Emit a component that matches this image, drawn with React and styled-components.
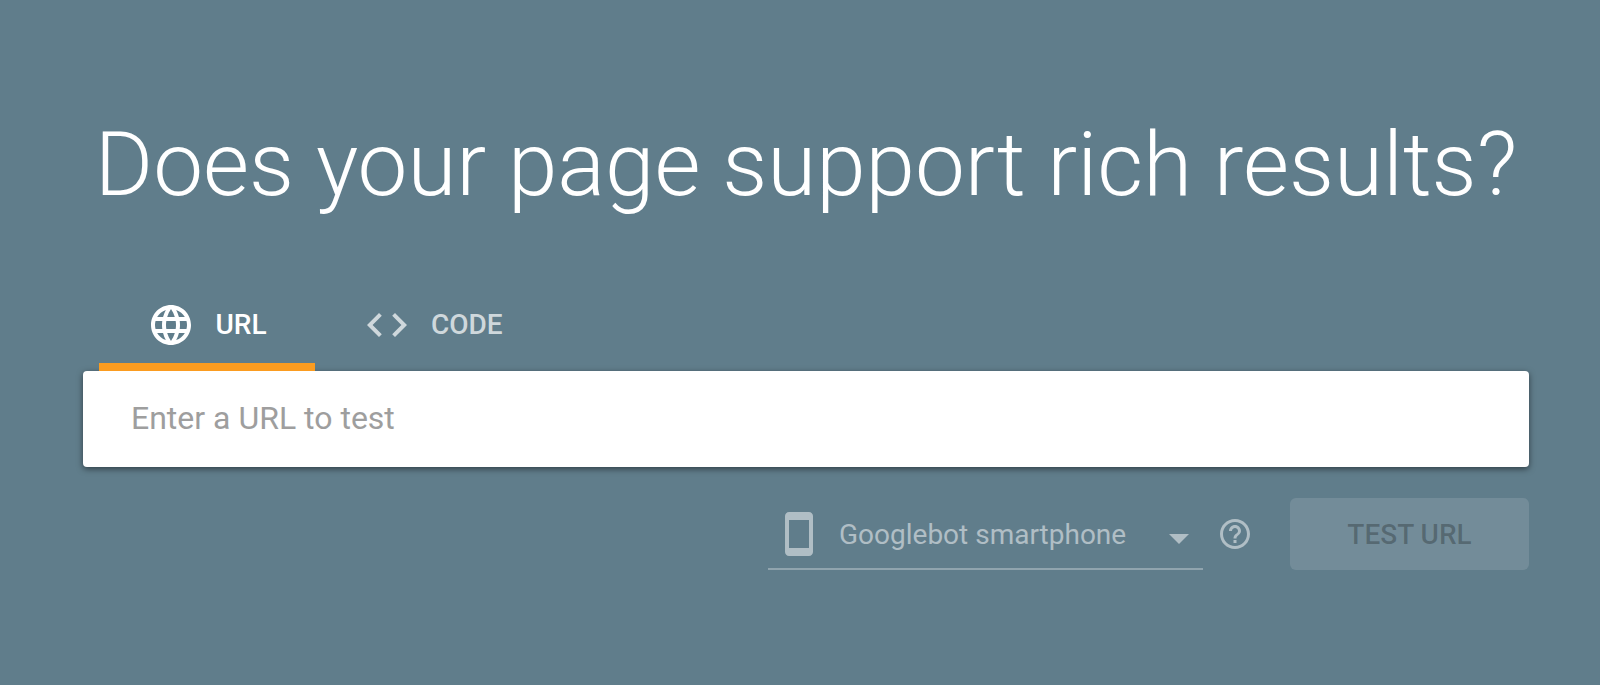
import React from 'react';
import styled, { createGlobalStyle } from 'styled-components';
import { MdLanguage, MdCode, MdStayCurrentPortrait, MdHelpOutline } from 'react-icons/md';

const GlobalStyle = createGlobalStyle`
    * {
        box-sizing: border-box;
    }
    body {
        margin: 0;
        background-color: #607d8b;
        font-family: Roboto, sans-serif;
    }
`
const Page = styled.main`
    padding: 109px 71px 0 83px;
`
const Title = styled.h1`
    margin: 0;
    color: white;
    font-size: 89px;
    font-weight: 300;
    line-height: 112px;
    text-align: center;
    white-space: nowrap;
`
const Tabs = styled.div`
    display: flex;
    margin-top: 59px;
    padding-left: 16px;
`
const Tab = styled.button`
    display: flex;
    align-items: center;
    justify-content: center;
    gap: 20px;
    min-width: 216px;
    height: 91px;
    padding: 6px 48px 0;
    border: none;
    border-bottom: 8px solid ${props => (props.$active ? '#fb9c20' : 'transparent')};
    background: none;
    color: ${props => (props.$active ? 'white' : '#cfd8dc')};
    font-family: inherit;
    font-size: 28px;
    font-weight: 500;
    cursor: pointer;
    svg {
        font-size: 48px;
    }
`
const UrlInput = styled.input`
    display: block;
    width: 100%;
    height: 96px;
    padding: 0 48px 2px;
    border: none;
    border-radius: 4px;
    background-color: white;
    box-shadow: 0 2px 6px rgba(0, 0, 0, 0.5);
    font-family: inherit;
    font-size: 32px;
    outline: none;
    &::placeholder {
        color: #9e9e9e;
        opacity: 1;
    }
`
const Actions = styled.div`
    display: flex;
    justify-content: flex-end;
    align-items: center;
    margin-top: 31px;
`
const AgentField = styled.label`
    display: flex;
    align-items: center;
    gap: 16px;
    width: 435px;
    height: 72px;
    padding: 2px 14px 0 7px;
    border-bottom: 2px solid #90a4ae;
    color: #b0bec5;
`
const AgentSelect = styled.select`
    flex: 1;
    min-width: 0;
    appearance: none;
    border: none;
    background: none;
    color: inherit;
    font-family: inherit;
    font-size: 28px;
    outline: none;
`
const HelpButton = styled.button`
    display: flex;
    margin: 0 37px 0 14px;
    padding: 0;
    border: none;
    background: none;
    color: #b0bec5;
    font-size: 36px;
    cursor: pointer;
`
const TestButton = styled.button`
    width: 239px;
    height: 72px;
    border: none;
    border-radius: 6px;
    background-color: rgba(255, 255, 255, 0.12);
    color: rgba(0, 0, 0, 0.26);
    font-family: inherit;
    font-size: 28px;
    font-weight: 500;
`

const App = () => (
    <Page>
        <GlobalStyle />
        <Title>Does your page support rich results?</Title>
        <Tabs role="tablist">
            <Tab role="tab" aria-selected="true" $active>
                <MdLanguage />
                URL
            </Tab>
            <Tab role="tab" aria-selected="false">
                <MdCode />
                CODE
            </Tab>
        </Tabs>
        <UrlInput type="url" placeholder="Enter a URL to test" aria-label="Enter a URL to test" />
        <Actions>
            <AgentField>
                <MdStayCurrentPortrait size={48} />
                <AgentSelect aria-label="User agent">
                    <option>Googlebot smartphone</option>
                </AgentSelect>
                <svg width="20" height="20" viewBox="0 0 20 20" fill="currentColor" aria-hidden="true">
                    <path d="M0 10h20L10 20z" />
                </svg>
            </AgentField>
            <HelpButton aria-label="Help">
                <MdHelpOutline />
            </HelpButton>
            <TestButton disabled>TEST URL</TestButton>
        </Actions>
    </Page>
)

export default App;
